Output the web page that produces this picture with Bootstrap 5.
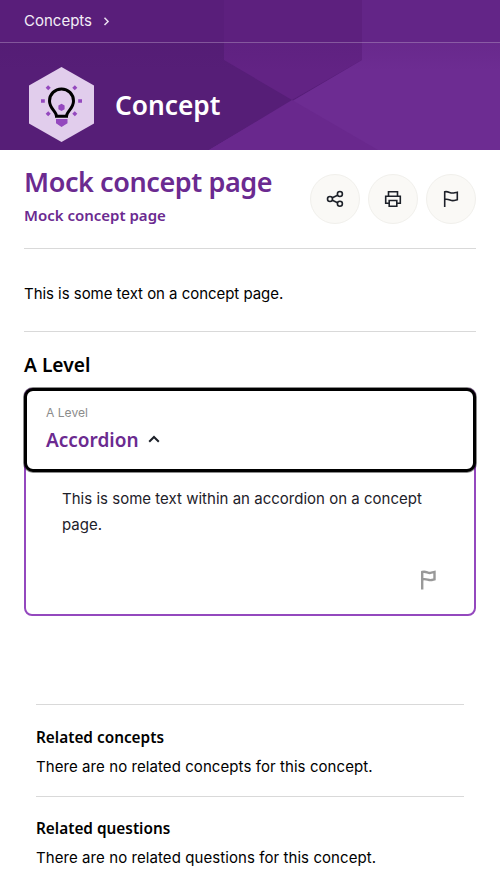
<!DOCTYPE html>
<html lang="en">
<head>
<meta charset="utf-8">
<meta name="viewport" content="width=device-width, initial-scale=1">
<title>Mock concept page</title>
<link href="https://cdn.jsdelivr.net/npm/bootstrap@5.3.0/dist/css/bootstrap.min.css" rel="stylesheet">
<style>
body{font-family:Inter,"Liberation Sans",sans-serif;color:#000;font-size:15px;line-height:26px;background:#fff}
h1,h2,h3,.exo{font-family:"Noto Sans","Open Sans",sans-serif;font-weight:600;margin:0}
p{margin:0}
.hero{height:150px;color:#fff;overflow:hidden;background:#561e77}
.hero-bg{width:500px;height:150px}
.crumbs{height:43px;border-bottom:1px solid rgba(255,255,255,.25)}
.crumbs a{color:#f3edf6}
.hero-title{font-size:26.3px;line-height:32px}
.page-title{font-size:27px;letter-spacing:-.42px;line-height:36px;color:#6b2a90}
.sub-title{font-size:15px;line-height:20px;color:#6b2a90;margin-top:5px}
.heading-row{height:98px;padding-top:14px}
.actions{padding-top:10px}
.rule{height:1px;background:#d9d9d9}
.round-btn{width:50px;height:50px;background:#faf9f6;border:1px solid #f1f0ec}
.intro{padding:32px 0 24px;letter-spacing:-.04px}
.stage{font-size:19.2px;line-height:26px;padding-top:20px}
.acc{border:2px solid #9448be;border-radius:8px;height:228px;margin-top:10px}
.acc-head{height:84px;margin:-2px;border:3px solid #000;border-radius:9px;padding:12px 19px;background:#fff;box-shadow:0 0 0 1px rgba(0,0,0,.45)}
.acc-sub{font-size:12.1px;line-height:20px;color:#8c8c8c}
.acc-title{font-size:19px;line-height:28px;color:#6b2a90;margin-top:3px}
.acc-title svg{margin-left:7px}
.acc-text{color:#1d2129;padding:16px 36px 0;letter-spacing:.015px}
.acc-flag{padding:31px 36px 0}
.related{margin-top:88px;padding:0 12px}
.related p{letter-spacing:.075px}
.rel{font-size:15.350px;line-height:24px;padding-top:20px}
.rel-gap{margin:5px 0 16px}
.rel-last{padding-top:19px}
</style>
</head>
<body>
<header class="hero position-relative">
<svg class="hero-bg position-absolute top-0 start-0" viewBox="0 0 500 150" aria-hidden="true">
<defs><linearGradient id="fade" x1="0" y1="0" x2="0" y2="1"><stop offset="0" stop-color="#4c166c" stop-opacity=".15"/><stop offset="1" stop-color="#4c166c" stop-opacity="0"/></linearGradient></defs>
<path fill="#561e77" d="M0 0h500v150H0z"/>
<path fill="#622384" d="M224 0h138v60l-70 40-68-40z"/>
<path fill="#6d2c92" d="M362 0h138v150H209L362 60z"/>
<path fill="#69288d" d="M292 100l86 50H209z"/>
<path fill="url(#fade)" d="M0 43h500v28H0z"/>
<path fill="#591e7a" d="M0 0h224v43H0z"/><path fill="#5d207e" d="M224 0h138v43H224z"/><path fill="#632587" d="M362 0h138v43H362z"/>
</svg>
<div class="position-relative">
<nav class="crumbs d-flex align-items-center px-4" aria-label="Breadcrumb">
<a href="#" class="text-decoration-none">Concepts</a>
<svg class="ms-2" width="12" height="12" viewBox="0 0 12 12" fill="none" stroke="#e9def0" stroke-width="1.5"><path d="M4.500 2.700l3.600 3.700-3.600 3.700"/></svg>
</nav>
<div class="d-flex align-items-center pt-4 ps-4">
<svg width="75" height="75" viewBox="24 67 75 75" aria-hidden="true">
<path fill="#e1cdec" d="M61.500 67L94 85.500v38L61.500 142 29 123.500v-38z"/>
<path fill="none" stroke="#000" stroke-width="3" d="M56.500 116.200h10c0-5 7-7.500 7-15.300a12 12 0 0 0-24 0c0 7.800 7 10.300 7 15.300z"/>
<path fill="#9448be" d="M61.500 103.800l3.100 1.800v3.600l-3.100 1.800-3.100-1.800v-3.600zM56 119h11.500v4.200l-6 3.800-5.500-3.800z"/>
<path stroke="#9448be" stroke-width="3.500" d="M41 101h3.800M78.200 101h3.800M46.900 86.400l2.600 2.600M76.100 86.400l-2.600 2.600M46.900 115.100l2.600-2.600M76.100 115.100l-2.600-2.600"/>
</svg>
<div class="exo hero-title ms-3">Concept</div>
</div>
</div>
</header>
<main class="px-4">
<div class="heading-row d-flex justify-content-between">
<div><h1 class="page-title">Mock concept page</h1><h2 class="sub-title">Mock concept page</h2></div>
<div class="actions d-flex gap-2">
<button class="btn round-btn rounded-circle p-0 d-flex align-items-center justify-content-center" aria-label="Share"><svg width="20" height="20" viewBox="0 0 20 20" fill="none" stroke="#1d2129" stroke-width="1.600"><circle cx="5" cy="10" r="2.500"/><circle cx="14.900" cy="5" r="2.500"/><circle cx="14.900" cy="14.800" r="2.500"/><path d="M7.300 8.800l5.300-2.600M7.300 11.200l5.300 2.500"/></svg></button>
<button class="btn round-btn rounded-circle p-0 d-flex align-items-center justify-content-center" aria-label="Print"><svg width="20" height="20" viewBox="0 0 20 20" fill="none" stroke="#1d2129" stroke-width="1.600"><path d="M5.500 7.300v-4.600h9v4.600M5.500 14.300H2.700v-7h14.600v7h-2.800M6.200 11.500h7.600v5.800H6.200z"/></svg></button>
<button class="btn round-btn rounded-circle p-0 d-flex align-items-center justify-content-center" aria-label="Report"><svg width="20" height="20" viewBox="0 0 20 20" fill="none" stroke="#1d2129" stroke-width="1.600"><path d="M3.700 18V2.800c4-.8 5.300 1.700 8.300 1.200 1.600-.3 3.200-.7 4.300-.8v7.500c-1.300.3-2.800.9-4.600.9-2.500 0-4.300-2-8-1.100"/></svg></button>
</div>
</div>
<div class="rule"></div>
<p class="intro">This is some text on a concept page.</p>
<div class="rule"></div>
<h2 class="stage">A Level</h2>
<section class="acc">
<div class="acc-head">
<div class="acc-sub">A Level</div>
<div class="exo acc-title d-flex align-items-center">Accordion<svg width="16" height="16" viewBox="0 0 16 16" fill="none" stroke="#1d2129" stroke-width="2"><path d="M3.200 9.800L8 5l4.800 4.800"/></svg></div>
</div>
<div class="acc-text">This is some text within an accordion on a concept page.</div>
<div class="acc-flag d-flex justify-content-end"><svg width="20" height="22" viewBox="0 0 20 22" fill="none" stroke="#999" stroke-width="2.400"><path d="M4.200 20.500V3c4-1.300 5.300 1.400 8.300.9 1.200-.2 2.800-.7 4-.9v7.300c-1.300.3-2.300.8-4.100.8-2.700 0-4.500-1.800-8.200-.6"/></svg></div>
</section>
<section class="related">
<div class="rule"></div>
<h3 class="rel">Related concepts</h3>
<p class="rel-gap">There are no related concepts for this concept.</p>
<div class="rule"></div>
<h3 class="rel rel-last">Related questions</h3>
<p class="rel-gap mb-0">There are no related questions for this concept.</p>
</section>
</main>
<script src="https://cdn.jsdelivr.net/npm/bootstrap@5.3.0/dist/js/bootstrap.bundle.min.js"></script>
</body>
</html>
